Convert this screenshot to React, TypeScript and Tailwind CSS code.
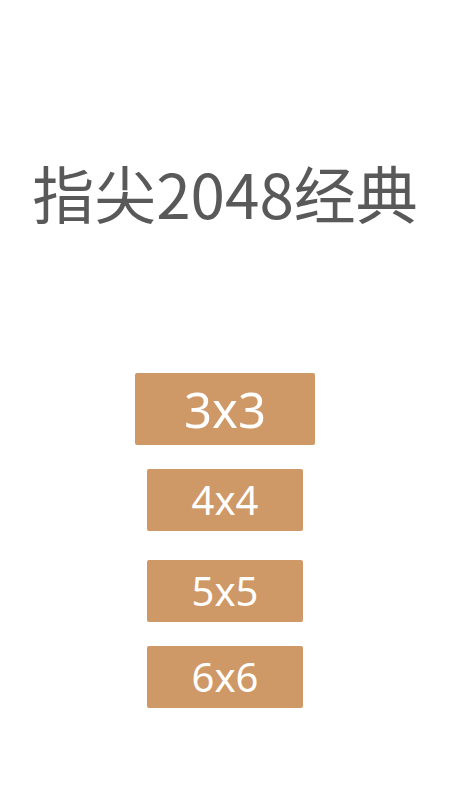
import React from 'react'

const sizes = [
  { label: '3x3', cls: 'w-[180px] h-[72px] text-[49px]', mt: 'mt-0' },
  { label: '4x4', cls: 'w-[156px] h-[62px] text-[40px]', mt: 'mt-[24px]' },
  { label: '5x5', cls: 'w-[156px] h-[62px] text-[40px]', mt: 'mt-[29px]' },
  { label: '6x6', cls: 'w-[156px] h-[62px] text-[40px]', mt: 'mt-[24px]' },
]

export default function App() {
  return (
    <div
      className="w-[450px] h-[800px] bg-white flex flex-col items-center"
      style={{ fontFamily: '"Noto Sans", "Noto Sans CJK SC", sans-serif' }}
    >
      <h1
        className="mt-[161px] text-[62px] leading-none text-[#595959] whitespace-nowrap"
        style={{ fontFamily: '"Noto Sans CJK SC", sans-serif' }}
      >
        指尖2048经典
      </h1>
      <div className="mt-[150px] flex flex-col items-center">
        {sizes.map((s) => (
          <button
            key={s.label}
            className={`${s.cls} ${s.mt} bg-[#cf9867] rounded-[2px] text-white flex items-center justify-center leading-none`}
          >
            {s.label}
          </button>
        ))}
      </div>
    </div>
  )
}
